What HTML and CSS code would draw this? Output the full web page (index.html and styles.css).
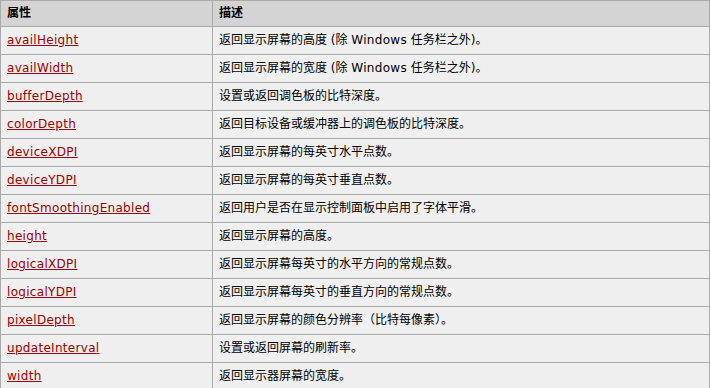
FILE: index.html
```html
<!DOCTYPE html>
<html lang="zh-CN">
<head>
<meta charset="utf-8">
<title>Screen 对象属性</title>
<link rel="stylesheet" href="styles.css">
</head>
<body>
<table class="props">
  <thead>
    <tr><th class="name">属性</th><th class="desc">描述</th></tr>
  </thead>
  <tbody>
    <tr><td><a href="#">availHeight</a></td><td>返回显示屏幕的高度 (除 <span class="latin">Windows</span> 任务栏之外)。</td></tr>
    <tr><td><a href="#">availWidth</a></td><td>返回显示屏幕的宽度 (除 <span class="latin">Windows</span> 任务栏之外)。</td></tr>
    <tr><td><a href="#">bufferDepth</a></td><td>设置或返回调色板的比特深度。</td></tr>
    <tr><td><a href="#">colorDepth</a></td><td>返回目标设备或缓冲器上的调色板的比特深度。</td></tr>
    <tr><td><a href="#">deviceXDPI</a></td><td>返回显示屏幕的每英寸水平点数。</td></tr>
    <tr><td><a href="#">deviceYDPI</a></td><td>返回显示屏幕的每英寸垂直点数。</td></tr>
    <tr><td><a href="#">fontSmoothingEnabled</a></td><td>返回用户是否在显示控制面板中启用了字体平滑。</td></tr>
    <tr><td><a href="#">height</a></td><td>返回显示屏幕的高度。</td></tr>
    <tr><td><a href="#">logicalXDPI</a></td><td>返回显示屏幕每英寸的水平方向的常规点数。</td></tr>
    <tr><td><a href="#">logicalYDPI</a></td><td>返回显示屏幕每英寸的垂直方向的常规点数。</td></tr>
    <tr><td><a href="#">pixelDepth</a></td><td>返回显示屏幕的颜色分辨率（比特每像素）。</td></tr>
    <tr><td><a href="#">updateInterval</a></td><td>设置或返回屏幕的刷新率。</td></tr>
    <tr><td><a href="#">width</a></td><td>返回显示器屏幕的宽度。</td></tr>
  </tbody>
</table>
</body>
</html>
```
FILE: styles.css
```css
html, body {
  margin: 0;
  padding: 0;
  background: #ffffff;
}

body {
  font-family: "DejaVu Sans", Verdana, "Noto Sans CJK SC", sans-serif;
  font-size: 12px;
  color: #000000;
}

.props {
  width: 710px;
  table-layout: fixed;
  border-collapse: separate;
  border-spacing: 0;
  border-top: 1px solid #aaaaaa;
  border-left: 1px solid #aaaaaa;
}

.props th,
.props td {
  border-right: 1px solid #aaaaaa;
  border-bottom: 1px solid #aaaaaa;
  padding: 0 6px;
  text-align: left;
  vertical-align: middle;
  white-space: nowrap;
  overflow: hidden;
}

.props th {
  background: #d4d4d4;
  font-weight: bold;
  height: 25px;
  line-height: 25px;
}

.props th.name {
  width: 199px;
}

.props td {
  background: #efefef;
  height: 27px;
  line-height: 27px;
}

.props a {
  color: #990000;
  text-decoration: underline;
  letter-spacing: 0.3px;
}

.latin {
  letter-spacing: 0.3px;
}
```
